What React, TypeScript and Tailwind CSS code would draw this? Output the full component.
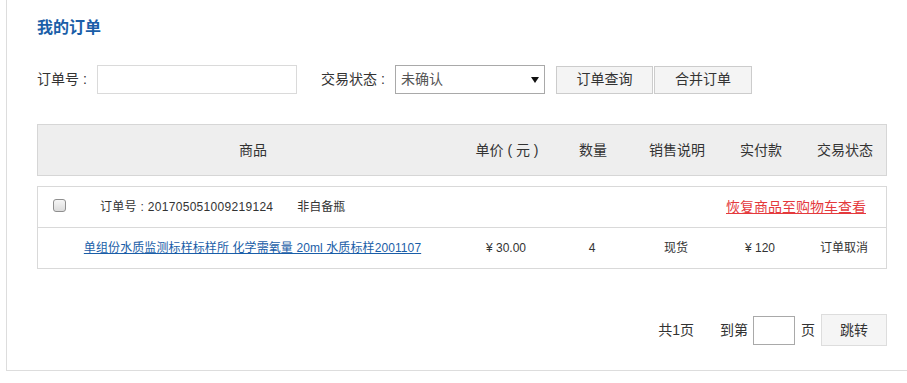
const font = { fontFamily: '"Liberation Sans", "Noto Sans CJK SC", sans-serif' };

const cols = [
  { label: "商品", w: "w-[430px]" },
  { label: "单价 ( 元 )", w: "w-[78px]" },
  { label: "数量", w: "w-[94px]" },
  { label: "销售说明", w: "w-[74px]" },
  { label: "实付款", w: "w-[94px]" },
  { label: "交易状态", w: "w-[74px]" },
];

const App = () => {
  return (
    <div className="w-[907px] h-[383px] overflow-hidden bg-white text-[#333]" style={font}>
      <div className="ml-[6px] w-[960px] border-l border-b border-[#dddddd] pl-[30px] pt-[18px] pb-6">
        {/* 标题 */}
        <h2 className="text-[16px] leading-5 font-bold text-[#1a5ea8]">我的订单</h2>

        {/* 查询条件 */}
        <div className="mt-[27px] flex items-center h-[29px] text-[14px]">
          <span className="w-[60px]">订单号 :</span>
          <div className="w-[200px] h-[29px] border border-[#dadada]" />
          <span className="ml-[24px] w-[74px]">交易状态 :</span>
          <div className="w-[150px] h-[29px] border border-[#a9a9a9] flex items-center justify-between pl-[5px] pr-[5px] text-[#555]">
            <span>未确认</span>
            <svg width="8" height="6" viewBox="0 0 8 6">
              <polygon points="0,0 8,0 4,6" fill="#111" />
            </svg>
          </div>
          <div className="ml-[11px] flex gap-px">
            <button className="w-[97px] h-[28px] bg-[#f4f4f4] border border-[#cccccc] text-[14px] text-[#333]">订单查询</button>
            <button className="w-[98px] h-[28px] bg-[#f4f4f4] border border-[#cccccc] text-[14px] text-[#333]">合并订单</button>
          </div>
        </div>

        {/* 表头 */}
        <div className="mt-[30px] w-[850px] h-[52px] bg-[#eeeeee] border border-[#d6d6d6] flex items-center text-[14px]">
          {cols.map((c) => (
            <div key={c.label} className={`${c.w} text-center`}>
              {c.label}
            </div>
          ))}
        </div>

        {/* 订单 */}
        <div className="mt-[10px] w-[850px] border border-[#d9d9d9] text-[12px]">
          <div className="h-[41px] border-b border-[#d9d9d9] flex items-center">
            <div className="ml-[15px] w-[13px] h-[13px] rounded-[3px] border border-[#8f8f8f] bg-linear-to-b from-[#f6f6f6] to-[#dcdcdc] -mt-[4px]" />
            <span className="ml-[34px] tracking-[0.3px]">订单号 : 201705051009219124</span>
            <span className="ml-[24px]">非自备瓶</span>
            <a href="#" className="ml-auto mr-[20px] text-[14px] text-[#e4393c] underline">
              恢复商品至购物车查看
            </a>
          </div>
          <div className="h-[40px] flex items-center">
            <div className="w-[429px] text-center">
              <a href="#" className="text-[#1a5ea8] underline tracking-[0.1px]">
                单组份水质监测标样标样所 化学需氧量 20ml 水质标样2001107
              </a>
            </div>
            <div className="w-[78px] text-center">¥ 30.00</div>
            <div className="w-[94px] text-center">4</div>
            <div className="w-[74px] text-center">现货</div>
            <div className="w-[94px] text-center">¥ 120</div>
            <div className="w-[74px] text-center">订单取消</div>
          </div>
        </div>

        {/* 分页 */}
        <div className="mt-[45px] w-[850px] h-[32px] flex items-center justify-end text-[14px]">
          <span>共1页</span>
          <span className="ml-[26px]">到第</span>
          <div className="ml-[5px] w-[42px] h-[29px] border border-[#a9a9a9]" />
          <span className="ml-[6px]">页</span>
          <button className="ml-[6px] w-[66px] h-[32px] bg-[#f5f5f5] border border-[#dddddd] text-[14px] text-[#333]">跳转</button>
        </div>
      </div>
    </div>
  );
};

export default App;
